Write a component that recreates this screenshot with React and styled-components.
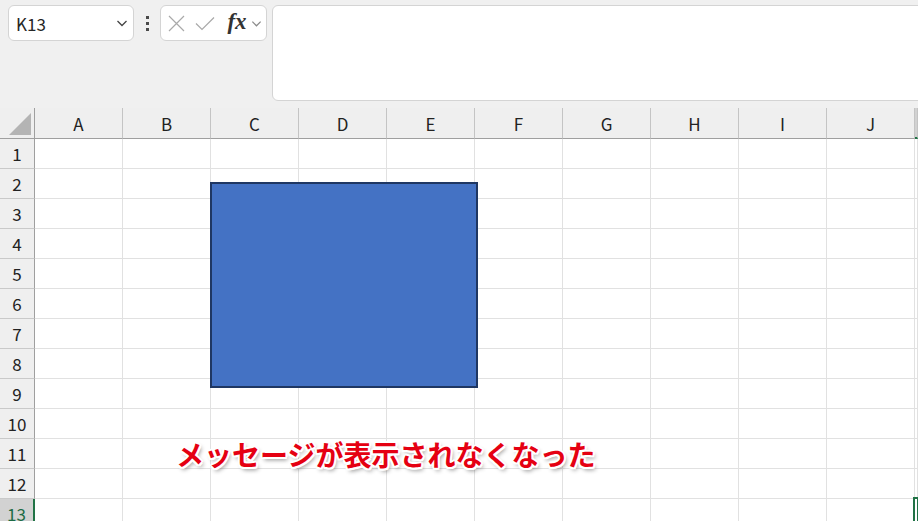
import React from 'react';
import styled, { createGlobalStyle } from 'styled-components';

const Global = createGlobalStyle`
  html, body { margin: 0; padding: 0; background: #f0f0f0; overflow: hidden; }
  body { font-family: "Noto Sans CJK JP", "Noto Sans", sans-serif; }
`;

const Page = styled.div`
  width: 918px;
  height: 521px;
  overflow: hidden;
  display: flex;
  flex-direction: column;
  background: #f0f0f0;
`;

const Toolbar = styled.div`
  height: 108px;
  flex-shrink: 0;
  box-sizing: border-box;
  padding: 5px 0 0 8px;
  display: flex;
  align-items: flex-start;
  overflow: hidden;
`;

const NameBox = styled.div`
  width: 126px;
  height: 36px;
  box-sizing: border-box;
  background: #fff;
  border: 1px solid #d4d4d4;
  border-radius: 6px;
  display: flex;
  align-items: center;
  justify-content: space-between;
  padding: 0 5px 0 7px;
  font-size: 17px;
  color: #262626;
`;

const Grip = styled.div`
  width: 26px;
  height: 36px;
  display: flex;
  flex-direction: column;
  align-items: center;
  justify-content: center;
  gap: 3px;
`;

const GripDot = styled.span`
  width: 3px;
  height: 3px;
  background: #4a4a4a;
`;

const FxBox = styled.div`
  width: 107px;
  height: 36px;
  box-sizing: border-box;
  background: #fff;
  border: 1px solid #d4d4d4;
  border-radius: 6px;
  display: flex;
  align-items: center;
  padding-left: 4px;
`;

const FxIcon = styled.span`
  display: flex;
  align-items: center;
  justify-content: center;
  width: ${p => p.w}px;
`;

const FxText = styled.span`
  font-family: "Liberation Serif", "DejaVu Serif", serif;
  font-style: italic;
  font-weight: 700;
  font-size: 23px;
  color: #333;
  width: 24px;
  text-align: center;
  line-height: 1;
  margin: -4px 2px 0 2px;
`;

const FormulaBar = styled.div`
  flex: 1;
  margin-left: 5px;
  margin-right: -12px;
  height: 96px;
  box-sizing: border-box;
  background: #fff;
  border: 1px solid #d4d4d4;
  border-radius: 6px;
`;

const Sheet = styled.div`
  position: relative;
  flex: 1;
  display: grid;
  grid-template-columns: 35px repeat(10, 88px) 1fr;
  grid-template-rows: 31px repeat(13, 30px);
  background: #fff;
`;

const Corner = styled.div`
  box-sizing: border-box;
  background: #efefef;
  border-right: 1px solid #9f9f9f;
  border-bottom: 1px solid #9f9f9f;
  display: flex;
  align-items: flex-end;
  justify-content: flex-end;
  padding: 0 3px 3px 0;
`;

const ColHeader = styled.div`
  box-sizing: border-box;
  background: ${p => (p.$sel ? '#d2d2d2' : '#efefef')};
  border-right: 1px solid #c4c4c4;
  border-bottom: ${p => (p.$sel ? '2px solid #217346' : '1px solid #9f9f9f')};
  display: flex;
  align-items: center;
  justify-content: center;
  font-size: 17px;
  line-height: 1;
  color: #222;
`;

const RowHeader = styled.div`
  box-sizing: border-box;
  background: ${p => (p.$sel ? '#d2d2d2' : '#efefef')};
  border-right: ${p => (p.$sel ? '2px solid #217346' : '1px solid #9f9f9f')};
  border-bottom: 1px solid #c9c9c9;
  display: flex;
  align-items: center;
  justify-content: center;
  font-size: 17px;
  line-height: 1;
  color: ${p => (p.$sel ? '#1d6b45' : '#222')};
`;

const Cell = styled.div`
  position: relative;
  box-sizing: border-box;
  border-right: 1px solid #e1e1e1;
  border-bottom: 1px solid #e1e1e1;
  ${p =>
    p.$sel &&
    `
    &::before {
      content: '';
      position: absolute;
      left: -2px;
      top: -2px;
      right: -2px;
      bottom: -2px;
      border: 2px solid #217346;
    }
  `}
`;

const Shape = styled.div`
  position: absolute;
  left: 210px;
  top: 74px;
  width: 268px;
  height: 206px;
  box-sizing: border-box;
  background: #4472c4;
  border: 2px solid #1f3763;
`;

const Caption = styled.div`
  position: absolute;
  left: 176px;
  top: 332px;
  font-family: "Noto Sans CJK JP", sans-serif;
  font-weight: 600;
  font-size: 28px;
  line-height: 28px;
  white-space: nowrap;
  color: #e50012;
  text-shadow:
    2px 0 #fff, -2px 0 #fff, 0 2px #fff, 0 -2px #fff,
    1.5px 1.5px #fff, -1.5px 1.5px #fff, 1.5px -1.5px #fff, -1.5px -1.5px #fff,
    2px 3px 4px rgba(0, 0, 0, 0.45);
`;

const cols = ['A', 'B', 'C', 'D', 'E', 'F', 'G', 'H', 'I', 'J'];
const rows = Array.from({ length: 13 }, (_, i) => i + 1);

const Chevron = ({ size = 12, color = '#444' }) => (
  <svg width={size} height={size} viewBox="0 0 12 12">
    <polyline points="1.5,4 6,8.5 10.5,4" fill="none" stroke={color} strokeWidth="1.3" />
  </svg>
);

export default function App() {
  return (
    <>
      <Global />
      <Page>
        <Toolbar>
          <NameBox>
            <span>K13</span>
            <Chevron />
          </NameBox>
          <Grip>
            <GripDot />
            <GripDot />
            <GripDot />
          </Grip>
          <FxBox>
            <FxIcon w={22}>
              <svg width="17" height="17" viewBox="0 0 17 17">
                <path d="M1 1 L16 16 M16 1 L1 16" stroke="#a9a9a9" strokeWidth="1.2" fill="none" />
              </svg>
            </FxIcon>
            <FxIcon w={36}>
              <svg width="20" height="15" viewBox="0 0 20 15">
                <polyline points="1,7.5 7,13.5 19,1.5" stroke="#a9a9a9" strokeWidth="1.2" fill="none" />
              </svg>
            </FxIcon>
            <FxText>fx</FxText>
            <Chevron size={11} color="#8a8a8a" />
          </FxBox>
          <FormulaBar />
        </Toolbar>
        <Sheet>
          <Corner>
            <svg width="22" height="22" viewBox="0 0 22 22">
              <polygon points="22,0 22,22 0,22" fill="#b4b4b4" />
            </svg>
          </Corner>
          {cols.map(c => (
            <ColHeader key={c}>{c}</ColHeader>
          ))}
          <ColHeader $sel />
          {rows.map(r => (
            <React.Fragment key={r}>
              <RowHeader $sel={r === 13}>{r}</RowHeader>
              {cols.map(c => (
                <Cell key={c} />
              ))}
              <Cell $sel={r === 13} />
            </React.Fragment>
          ))}
          <Shape />
          <Caption>メッセージが表示されなくなった</Caption>
        </Sheet>
      </Page>
    </>
  );
}
